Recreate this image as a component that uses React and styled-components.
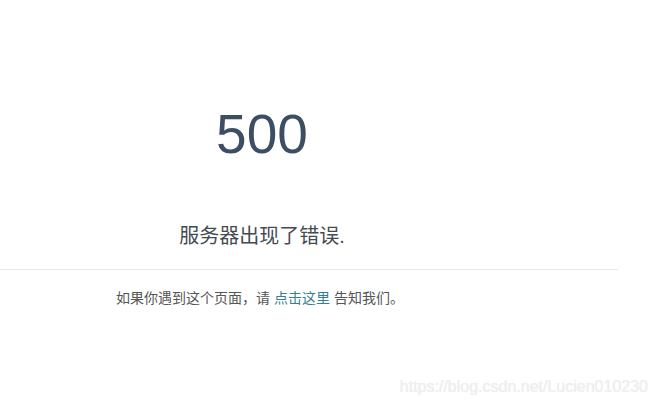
import React from 'react'
import styled, {createGlobalStyle} from 'styled-components'

const GlobalStyle = createGlobalStyle`
    html, body {
        margin: 0;
        padding: 0;
        background: #fff;
    }
    body {
        font-family: "Liberation Sans", Arial, "Noto Sans CJK SC", sans-serif;
    }
`

const Page = styled.div`
    width: 656px;
    height: 405px;
    position: relative;
    overflow: hidden;
`

const Hero = styled.div`
    width: 524px;
    padding-top: 103px;
    display: flex;
    flex-direction: column;
    align-items: center;
`

const Code = styled.h1`
    margin: 0;
    font-size: 55px;
    font-weight: normal;
    line-height: 62px;
    color: #3d4e62;
`

const Message = styled.h2`
    margin: 56px 0 0;
    font-size: 20px;
    font-weight: normal;
    line-height: 30px;
    color: #444a52;
`

const Divider = styled.hr`
    width: 618px;
    margin: 18px 0 0;
    border: 0;
    border-top: 1px solid #e8e8e8;
`

const Footer = styled.p`
    width: 520px;
    margin: 18px 0 0;
    text-align: center;
    font-size: 14px;
    line-height: 20px;
    color: #555;
`

const Link = styled.a`
    color: #367f90;
    text-decoration: none;
`

const Watermark = styled.span`
    position: absolute;
    right: 8px;
    bottom: 9px;
    font-size: 16px;
    color: #f0f0f0;
    text-shadow: 0 0 1px #e6e6e6;
`

export default function App() {
    return (
        <Page>
            <GlobalStyle />
            <Hero>
                <Code>500</Code>
                <Message>服务器出现了错误.</Message>
            </Hero>
            <Divider />
            <Footer>
                如果你遇到这个页面，请 <Link href="#">点击这里</Link> 告知我们。
            </Footer>
            <Watermark>https://blog.csdn.net/Lucien010230</Watermark>
        </Page>
    )
}
